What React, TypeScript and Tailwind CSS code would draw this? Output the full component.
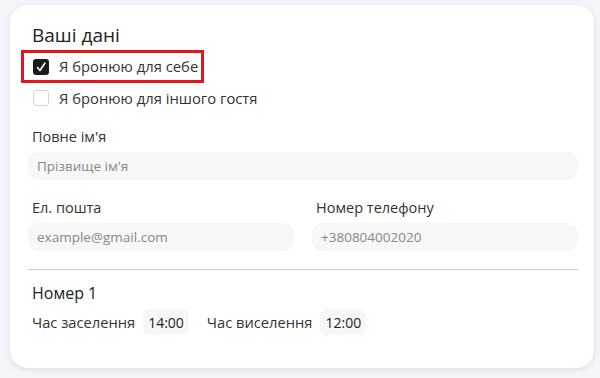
import { useState } from "react";

export default function App() {
    const [forSelf, setForSelf] = useState(true);
    const [forOther, setForOther] = useState(false);

    return (
        <div className="w-[600px] h-[378px] bg-[#f4f5f9] pt-[5px] pl-[10px] pr-[6px] font-['Open_Sans',sans-serif]">
            <div className="w-full h-[363px] bg-white rounded-[18px] shadow-[0_2px_6px_rgba(30,40,80,0.10)] pl-[18px] pr-[16px] pt-[18px]">
                <h2 className="text-[19px] leading-[24px] text-[#222] pl-[4px]">Ваші дані</h2>

                <div className="mt-[3px] flex flex-col">
                    <div className="w-[183px] h-[33px] border-[3px] border-[#e3141b] flex items-center pl-[9px] -ml-[7px]">
                        <label className="flex items-center gap-[10px] cursor-pointer">
                            <button
                                onClick={() => setForSelf(!forSelf)}
                                className={`w-[16px] h-[16px] rounded-[3px] flex items-center justify-center ${forSelf ? "bg-[#1c1c1c]" : "border border-[#ccc] bg-white"}`}
                            >
                                {forSelf && (
                                    <svg width="12" height="12" viewBox="0 0 12 12" fill="none">
                                        <path d="M2.5 6.5 L5 9.5 L9.8 2.2" stroke="white" strokeWidth="1.6" strokeLinecap="round" strokeLinejoin="round" />
                                    </svg>
                                )}
                            </button>
                            <span className="text-[14.8px] text-[#333] whitespace-nowrap">Я бронюю для себе</span>
                        </label>
                    </div>
                    <label className="flex items-center gap-[10px] mt-[4px] pl-[5px] cursor-pointer">
                        <button
                            onClick={() => setForOther(!forOther)}
                            className={`w-[16px] h-[16px] rounded-[3px] flex items-center justify-center ${forOther ? "bg-[#1c1c1c]" : "border border-[#d4d4d4] bg-white"}`}
                        >
                            {forOther && (
                                <svg width="12" height="12" viewBox="0 0 12 12" fill="none">
                                    <path d="M2.5 6.5 L5 9.5 L9.8 2.2" stroke="white" strokeWidth="1.6" strokeLinecap="round" strokeLinejoin="round" />
                                </svg>
                            )}
                        </button>
                        <span className="text-[14.8px] text-[#333]">Я бронюю для іншого гостя</span>
                    </label>
                </div>

                <div className="mt-[18px]">
                    <p className="text-[14.5px] text-[#333] pl-[4px] leading-[20px]">Повне ім'я</p>
                    <input
                        placeholder="Прізвище ім'я"
                        className="mt-[5px] w-full h-[28px] rounded-[10px] bg-[#f7f7f7] px-[9px] text-[13.5px] placeholder:text-[#888] outline-none"
                    />
                </div>

                <div className="mt-[18px] grid grid-cols-2 gap-[18px]">
                    <div>
                        <p className="text-[14.5px] text-[#333] pl-[4px] leading-[20px]">Ел. пошта</p>
                        <input
                            placeholder="example@gmail.com"
                            className="mt-[5px] w-full h-[28px] rounded-[10px] bg-[#f7f7f7] px-[9px] text-[13.5px] placeholder:text-[#888] outline-none"
                        />
                    </div>
                    <div>
                        <p className="text-[14.5px] text-[#333] pl-[4px] leading-[20px]">Номер телефону</p>
                        <input
                            placeholder="+380804002020"
                            className="mt-[5px] w-full h-[28px] rounded-[10px] bg-[#f7f7f7] px-[9px] text-[13.5px] placeholder:text-[#888] outline-none"
                        />
                    </div>
                </div>

                <div className="mt-[18px] h-px bg-[#cfcfcf]" />

                <h3 className="mt-[12px] text-[16px] text-[#222] pl-[4px] leading-[22px]">Номер 1</h3>
                <div className="mt-[5px] flex items-center pl-[4px] text-[14.7px] text-[#333]">
                    <span>Час заселення</span>
                    <span className="ml-[8px] h-[26px] px-[5px] rounded-[6px] bg-[#f7f7f7] flex items-center text-[14px] text-[#222]">14:00</span>
                    <span className="ml-[18px]">Час виселення</span>
                    <span className="ml-[8px] h-[26px] px-[5px] rounded-[6px] bg-[#f7f7f7] flex items-center text-[14px] text-[#222]">12:00</span>
                </div>
            </div>
        </div>
    );
}
